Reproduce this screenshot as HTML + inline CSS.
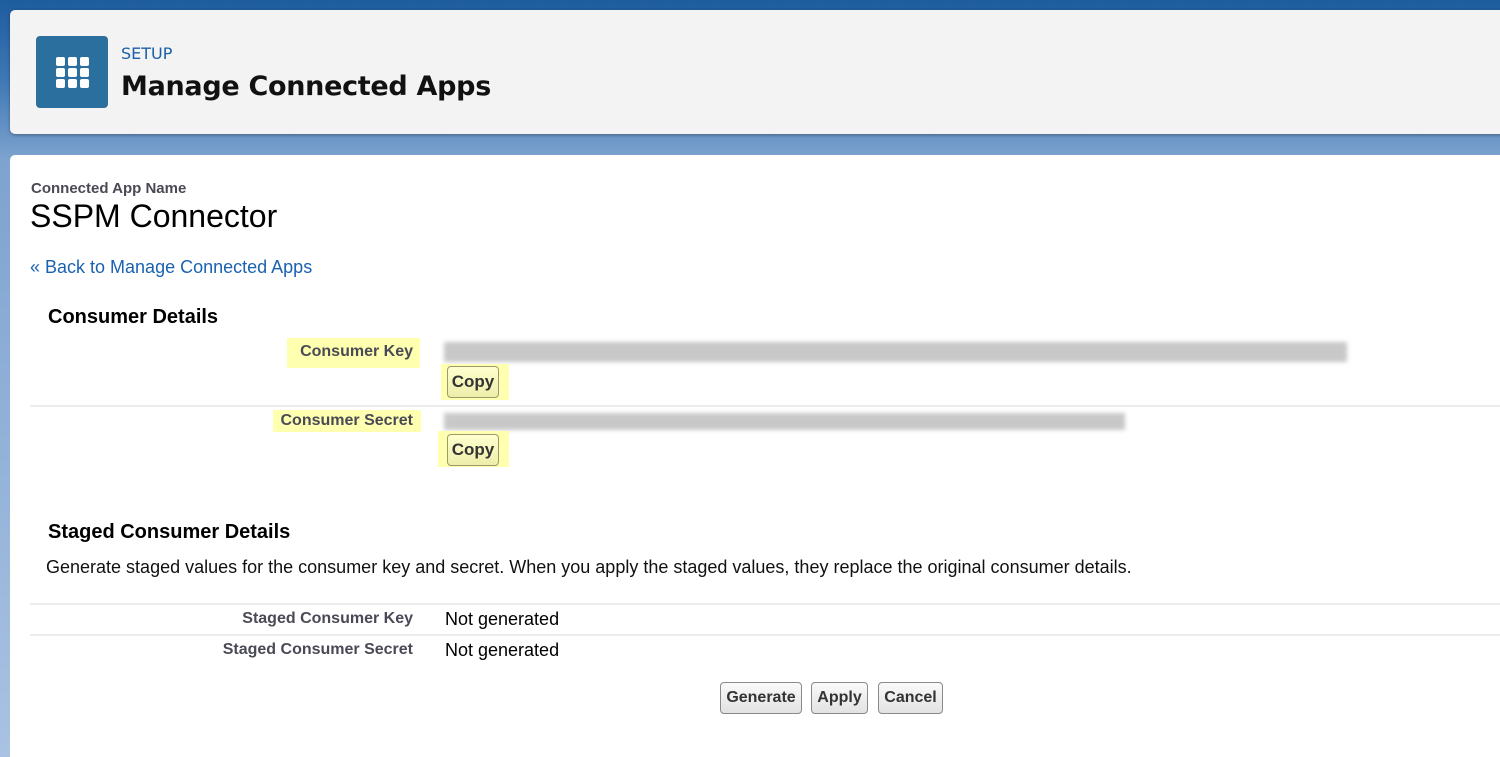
<!DOCTYPE html>
<html><head><meta charset="utf-8"><style>
*{margin:0;padding:0;box-sizing:border-box}
html,body{width:1500px;height:757px;overflow:hidden}
body{position:relative;font-family:"Liberation Sans",Arial,sans-serif;background:linear-gradient(180deg,#1d5c9e 0px,#3f78b5 80px,#7ea3cf 160px,#a9c2e2 757px)}
.a{position:absolute}
.hdr{left:10px;top:10px;width:1500px;height:124px;background:#f3f3f3;border-radius:5px;box-shadow:0 1px 3px rgba(0,0,0,.35)}
.ico{left:36px;top:36px;width:72px;height:72px;background:#2a6f9e;border-radius:4px}
.dot{position:absolute;width:9px;height:9px;background:#fff;border-radius:2px}
.panel{left:10px;top:155px;width:1500px;height:602px;background:#fff;border-radius:5px 0 0 0}
.lbl{font-weight:bold;color:#4a4a56;font-size:16px}
.hl{background:#ffffb0}
.btn{border:1px solid #8a8a8a;border-radius:4px;background:linear-gradient(#fafafa,#e2e2e2);font-weight:bold;font-size:16px;color:#333;text-align:center;line-height:30px;height:32px}
.cbtn{border:1px solid #9b9b6a;border-radius:4px;background:linear-gradient(#ffffd0,#eeeeaa);font-weight:bold;font-size:17px;color:#333;text-align:center;line-height:30px;width:52px;height:32px}
.blur{background:#c8c8c8;filter:blur(2px)}
.line{height:2px;background:#ececec;left:30px;width:1470px}
.r{text-align:right;width:300px}
</style></head><body>
<div class="a hdr"></div>
<div class="a ico">
<div class="dot" style="left:20px;top:21px"></div><div class="dot" style="left:32px;top:21px"></div><div class="dot" style="left:44px;top:21px"></div>
<div class="dot" style="left:20px;top:32px"></div><div class="dot" style="left:32px;top:32px"></div><div class="dot" style="left:44px;top:32px"></div>
<div class="dot" style="left:20px;top:43px"></div><div class="dot" style="left:32px;top:43px"></div><div class="dot" style="left:44px;top:43px"></div>
</div>
<div class="a" style="left:121px;top:44px;color:#1b5fa8;font-family:'DejaVu Sans',sans-serif;font-size:16px">SETUP</div>
<div class="a" style="left:121px;top:71px;font-size:27px;font-weight:bold;color:#111;font-family:'DejaVu Sans',sans-serif;letter-spacing:-0.3px">Manage Connected Apps</div>
<div class="a panel"></div>
<div class="a" style="left:31px;top:180px;font-size:15px;font-weight:bold;color:#4a4a56">Connected App Name</div>
<div class="a" style="left:30px;top:198px;font-size:32px;color:#000">SSPM Connector</div>
<div class="a" style="left:30px;top:257px;font-size:18px;color:#1a62b0">« Back to Manage Connected Apps</div>
<div class="a" style="left:48px;top:306px;font-size:20px;font-weight:bold;color:#000">Consumer Details</div>
<div class="a hl" style="left:287px;top:338px;width:133px;height:30px"></div>
<div class="a lbl r" style="left:113px;top:343px">Consumer Key</div>
<div class="a blur" style="left:444px;top:342px;width:903px;height:20px"></div>
<div class="a hl" style="left:441px;top:364px;width:68px;height:36px"></div>
<div class="a cbtn" style="left:447px;top:366px">Copy</div>
<div class="a line" style="top:405px"></div>
<div class="a hl" style="left:273px;top:410px;width:148px;height:22px"></div>
<div class="a lbl r" style="left:113px;top:412px">Consumer Secret</div>
<div class="a blur" style="left:444px;top:413px;width:681px;height:17px"></div>
<div class="a hl" style="left:438px;top:431px;width:71px;height:36px"></div>
<div class="a cbtn" style="left:447px;top:434px">Copy</div>
<div class="a" style="left:48px;top:521px;font-size:20px;font-weight:bold;color:#000">Staged Consumer Details</div>
<div class="a" style="left:46px;top:557px;font-size:18px;color:#111">Generate staged values for the consumer key and secret. When you apply the staged values, they replace the original consumer details.</div>
<div class="a line" style="top:603px"></div>
<div class="a lbl r" style="left:113px;top:610px">Staged Consumer Key</div>
<div class="a" style="left:445px;top:609px;font-size:18px;color:#000">Not generated</div>
<div class="a line" style="top:634px"></div>
<div class="a lbl r" style="left:113px;top:641px">Staged Consumer Secret</div>
<div class="a" style="left:445px;top:640px;font-size:18px;color:#000">Not generated</div>
<div class="a btn" style="left:720px;top:682px;width:82px">Generate</div>
<div class="a btn" style="left:811px;top:682px;width:57px">Apply</div>
<div class="a btn" style="left:878px;top:682px;width:65px">Cancel</div>
</body></html>
